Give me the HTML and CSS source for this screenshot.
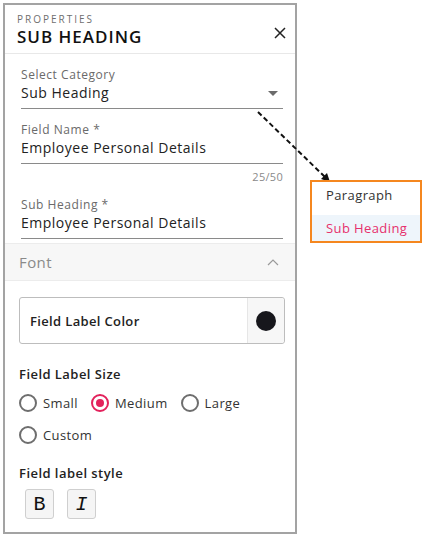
FILE: index.html
```html
<!DOCTYPE html>
<html>
<head>
<meta charset="utf-8">
<link rel="stylesheet" href="styles.css">
</head>
<body>
<div class="stage">
  <div class="panel">
    <div class="header">
      <div class="titles">
        <div class="kicker">PROPERTIES</div>
        <div class="title">SUB HEADING</div>
      </div>
      <svg class="close" width="12" height="12" viewBox="0 0 12 12"><path d="M1 1L11 11M11 1L1 11" stroke="#222" stroke-width="1.5" fill="none"/></svg>
    </div>
    <div class="fields">
      <div class="field first">
        <div class="label">Select Category</div>
        <div class="value select"><span>Sub Heading</span><svg class="caret" width="10" height="5" viewBox="0 0 10 5"><path d="M0 0H10L5 5Z" fill="#6b6b6b"/></svg></div>
      </div>
      <div class="field second">
        <div class="label">Field Name *</div>
        <div class="value">Employee Personal Details</div>
      </div>
      <div class="counter">25/50</div>
      <div class="field third">
        <div class="label">Sub Heading *</div>
        <div class="value">Employee Personal Details</div>
      </div>
    </div>
    <div class="section-head">
      <span>Font</span>
      <svg width="12" height="7" viewBox="0 0 12 7"><path d="M1 6L6 1L11 6" stroke="#9a9a9a" stroke-width="1.2" fill="none"/></svg>
    </div>
    <div class="font-body">
      <div class="color-box">
        <div class="color-label">Field Label Color</div>
        <div class="swatch-cell"><span class="swatch"></span></div>
      </div>
      <div class="group-title size-title">Field Label Size</div>
      <div class="radio-row">
        <label class="radio"><span class="dot"></span>Small</label>
        <label class="radio on"><span class="dot"></span>Medium</label>
        <label class="radio"><span class="dot"></span>Large</label>
      </div>
      <div class="radio-row">
        <label class="radio"><span class="dot"></span>Custom</label>
      </div>
      <div class="group-title style-title">Field label style</div>
      <div class="style-buttons">
        <span class="sbtn bold">B</span>
        <span class="sbtn ital">I</span>
      </div>
    </div>
  </div>
  <svg class="connector" width="427" height="200" viewBox="0 0 427 200">
    <line x1="258" y1="112" x2="325" y2="177" stroke="#111" stroke-width="2" stroke-dasharray="5 3"/>
    <path d="M330 182L321 179L327 173Z" fill="#111"/>
  </svg>
  <div class="menu">
    <div class="menu-item">Paragraph</div>
    <div class="menu-item active">Sub Heading</div>
  </div>
</div>
</body>
</html>
```
FILE: styles.css
```css
* { box-sizing: border-box; }
html, body { margin: 0; padding: 0; background: #fff; }
body { font-family: "Open Sans", "Noto Sans", sans-serif; color: #222; }
.stage { position: relative; width: 427px; height: 535px; padding: 3px 0 0 3px; }
.panel { width: 294px; height: 531px; border: 2px solid #a3a3a3; background: #fff; }
.header { height: 49px; display: flex; justify-content: space-between; align-items: flex-start; padding: 8px 9px 0 12px; border-bottom: 1px solid #e8e8e8; }
.kicker { font-size: 10px; letter-spacing: 2px; color: #6f6f6f; line-height: 13px; }
.title { font-size: 17px; font-weight: 600; letter-spacing: 1px; color: #111; line-height: 21px; }
.close { margin-top: 14px; }
.fields { padding: 0 12px 0 16px; }
.field { border-bottom: 1px solid #8a8a8a; }
.field.first { margin-top: 13px; }
.field.second { margin-top: 13px; }
.field.third { margin-top: 13px; }
.label { font-size: 12px; line-height: 16px; color: #6a6a6a; letter-spacing: 0.55px; }
.value { font-size: 14px; line-height: 20px; color: #222; padding-bottom: 5px; letter-spacing: 0.5px; }
.select { display: flex; justify-content: space-between; align-items: center; }
.caret { margin-right: 5px; }
.counter { font-size: 11px; line-height: 14px; color: #8a8a8a; text-align: right; margin-top: 6px; letter-spacing: 0.3px; }
.section-head { margin-top: 4px; height: 38px; background: #f7f7f7; border-top: 1px solid #ececec; border-bottom: 1px solid #ececec; display: flex; justify-content: space-between; align-items: center; padding: 0 16px 0 14px; font-size: 15px; color: #8a8a8a; letter-spacing: 0.4px; }
.font-body { padding: 0 10px 0 14px; }
.color-box { margin-top: 16px; height: 47px; border: 1px solid #bdbdbd; border-radius: 3px; display: flex; align-items: stretch; }
.color-label { flex: 1; display: flex; align-items: center; padding-left: 10px; font-size: 13px; font-weight: 600; color: #222; letter-spacing: 0.35px; }
.swatch-cell { width: 37px; background: #f7f7f7; border-left: 1px solid #e6e6e6; display: flex; align-items: center; justify-content: center; border-radius: 0 3px 3px 0; }
.swatch { width: 20px; height: 20px; border-radius: 50%; background: #17171c; }
.group-title { font-size: 13px; font-weight: 600; line-height: 16px; color: #222; letter-spacing: 0.45px; }
.size-title { margin-top: 22px; }
.radio-row { display: flex; gap: 13px; margin-top: 10px; height: 22px; align-items: center; }
.radio { display: flex; align-items: center; gap: 6px; font-size: 13px; color: #333; letter-spacing: 0.4px; }
.dot { width: 18px; height: 18px; border: 2px solid #6e6e6e; border-radius: 50%; display: inline-flex; align-items: center; justify-content: center; }
.radio.on .dot { border-color: #e3225c; }
.radio.on .dot::after { content: ""; width: 8px; height: 8px; border-radius: 50%; background: #e3225c; }
.style-title { margin-top: 19px; }
.style-buttons { display: flex; gap: 13px; margin-top: 8px; padding-left: 6px; }
.sbtn { width: 29px; height: 30px; border: 1px solid #cfcfcf; border-radius: 3px; background: #f5f5f5; display: flex; align-items: center; justify-content: center; font-family: "Liberation Mono", "DejaVu Sans Mono", monospace; font-size: 20px; color: #111; }
.sbtn.bold { font-weight: 400; }
.sbtn.ital { font-style: italic; }
.connector { position: absolute; left: 0; top: 0; pointer-events: none; }
.menu { position: absolute; left: 310px; top: 180px; width: 112px; height: 63px; border: 2px solid #f5871f; background: #fff; }
.menu-item { height: 26px; display: flex; align-items: center; padding-left: 14px; font-size: 13px; color: #333; letter-spacing: 0.4px; }
.menu-item.active { margin-top: 7px; background: #eef5fb; color: #e6306c; }
```
